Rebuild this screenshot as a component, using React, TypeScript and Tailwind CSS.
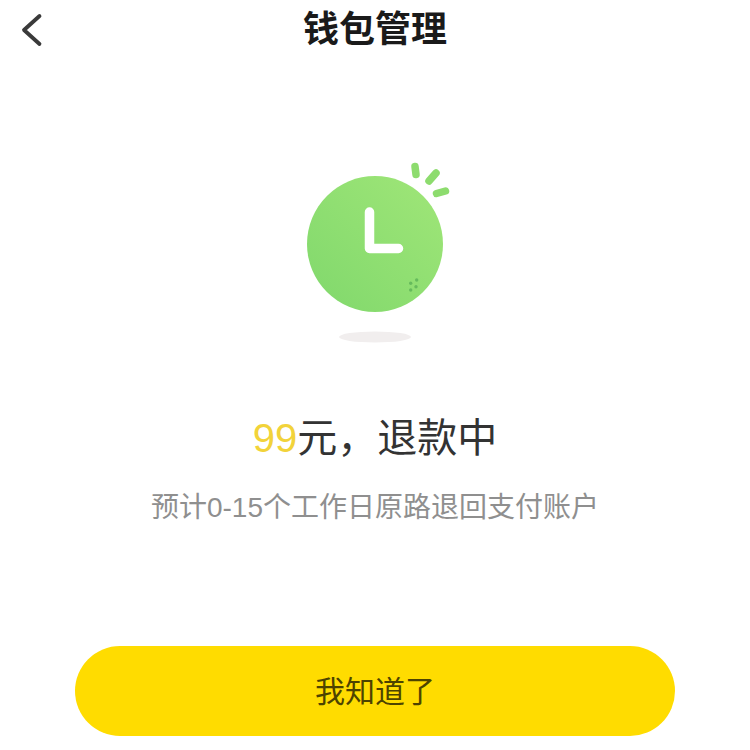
import React from "react";

const fontStack = "font-['Liberation_Sans','Noto_Sans_CJK_SC',sans-serif]";

const ClockIllustration: React.FC = () => (
  <svg className="shrink-0" width="164" height="190" viewBox="-14 0 164 190" fill="none">
    <defs>
      <linearGradient id="clockFill" x1="1" y1="0" x2="0" y2="1">
        <stop offset="0" stopColor="#a0e678" />
        <stop offset="1" stopColor="#80d86c" />
      </linearGradient>
    </defs>
    <circle cx="68" cy="84" r="68" fill="url(#clockFill)" />
    <path d="M62.500 52V88.500H91.500" stroke="#fff" strokeWidth="9.500" strokeLinecap="round" strokeLinejoin="round" />
    <g fill="#66bb5c">
      <circle cx="103.700" cy="123.300" r="1.700" />
      <circle cx="109.700" cy="120" r="1.700" />
      <circle cx="103.700" cy="130" r="1.700" />
      <circle cx="109" cy="126.700" r="1.700" />
    </g>
    <g stroke="#8ddc6e" strokeWidth="7.500" strokeLinecap="round">
      <path d="M108 6.500L109 14.500" />
      <path d="M129 13L122 21" />
      <path d="M138.500 31L129.500 33.500" />
    </g>
    <ellipse cx="68" cy="177" rx="36" ry="5.500" fill="#f1eeee" />
  </svg>
);

export default function App() {
  return (
    <div className={`w-[750px] h-[750px] bg-white flex flex-col items-center overflow-hidden ${fontStack}`}>
      <header className="relative w-full h-[60px] flex items-center justify-center">
        <svg className="absolute left-[20px] top-[12px]" width="26" height="36" viewBox="0 0 26 36" fill="none">
          <path d="M19.500 4L4 18L19.500 32" stroke="#3a3a3a" strokeWidth="3.800" strokeLinecap="round" strokeLinejoin="round" />
        </svg>
        <h1 className="text-[36px] leading-none font-bold text-[#1a1a1a]">钱包管理</h1>
      </header>

      <div className="mt-[100px] flex justify-center">
        <ClockIllustration />
      </div>

      <p className="mt-[60px] text-[40px] leading-[56px] text-[#333333]">
        <span className="text-[#f2d33a]">99</span>元，退款中
      </p>
      <p className="mt-[22px] text-[28px] leading-[40px] text-[#8f8f8f]">预计0-15个工作日原路退回支付账户</p>

      <button className="mt-[118px] w-[600px] h-[90px] rounded-full bg-[#ffdc00] text-[30px] text-[#4d4300] flex items-center justify-center">
        我知道了
      </button>
    </div>
  );
}
